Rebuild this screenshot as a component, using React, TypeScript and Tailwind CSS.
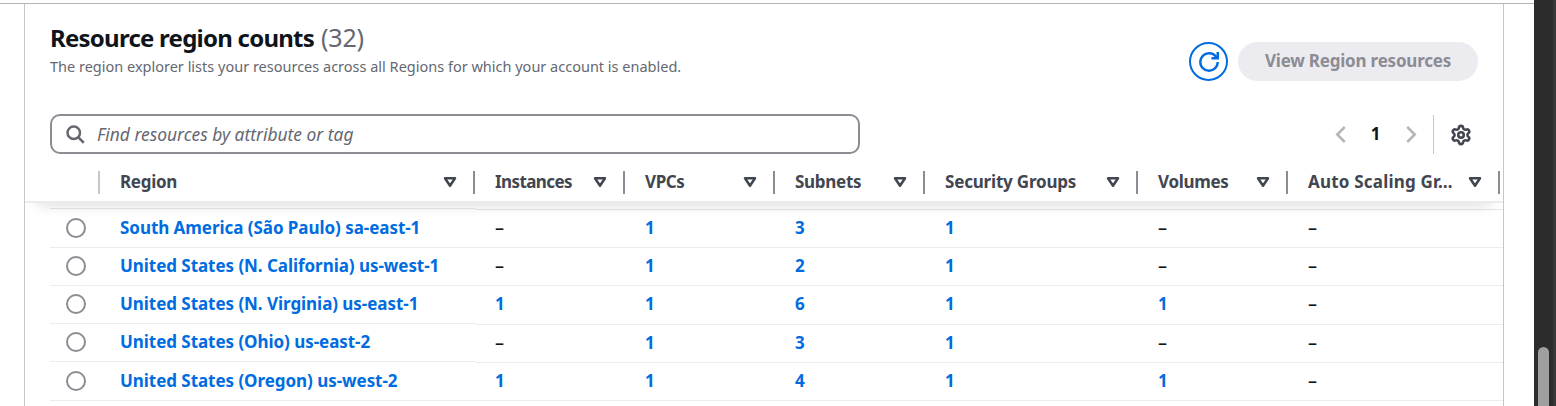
import React from "react";
import clsx from "clsx";
import { Settings } from "lucide-react";

type Column = { label: string; width: string; tracking: string };

const columns: Column[] = [
  { label: "Instances", width: "w-[150px]", tracking: "tracking-[-0.58px]" },
  { label: "VPCs", width: "w-[150px]", tracking: "tracking-[-0.4px]" },
  { label: "Subnets", width: "w-[150px]", tracking: "tracking-[-0.28px]" },
  { label: "Security Groups", width: "w-[213px]", tracking: "tracking-[-0.19px]" },
  { label: "Volumes", width: "w-[150px]", tracking: "tracking-[-0.3px]" },
  { label: "Auto Scaling Gr…", width: "w-[212px]", tracking: "tracking-[0.2px]" },
];

type Row = { region: string; left: string; right: string; counts: string[] };

const rows: Row[] = [
  { region: "South America (São Paulo) sa-east-1", left: "h-[39px]", right: "h-[38px] pb-[1px]", counts: ["–", "1", "3", "1", "–", "–"] },
  { region: "United States (N. California) us-west-1", left: "h-[38px] pb-[2px]", right: "h-[38px] pb-[2px]", counts: ["–", "1", "2", "1", "–", "–"] },
  { region: "United States (N. Virginia) us-east-1", left: "h-[38px] pb-[2px]", right: "h-[39px] pb-[2px]", counts: ["1", "1", "6", "1", "1", "–"] },
  { region: "United States (Ohio) us-east-2", left: "h-[38px] pb-[2px]", right: "h-[38px] pb-[2px]", counts: ["–", "1", "3", "1", "–", "–"] },
  { region: "United States (Oregon) us-west-2", left: "h-[39px]", right: "h-[38px] pb-[1px]", counts: ["1", "1", "4", "1", "1", "–"] },
];

function Icon({ children, className }: { children: React.ReactNode; className?: string }) {
  return (
    <svg
      viewBox="0 0 16 16"
      fill="none"
      stroke="currentColor"
      strokeWidth="2"
      className={clsx("size-5 shrink-0 overflow-visible", className)}
    >
      {children}
    </svg>
  );
}

function HeaderCell({ label, width, tracking }: Column) {
  return (
    <div className={clsx("flex h-[39px] shrink-0 items-center justify-between pr-[15px] pb-[1px] pl-[20px]", width)}>
      <span className={clsx("whitespace-nowrap", tracking)}>{label}</span>
      <Icon>
        <path d="M4 5h8l-4 6-4-6Z" strokeLinejoin="round" />
      </Icon>
    </div>
  );
}

function Divider({ light }: { light?: boolean }) {
  return <div className={clsx("-ml-[2px] h-[23px] w-[2px] shrink-0", light ? "bg-[#c6c6cd]" : "bg-[#8c8c94]")} />;
}

export default function App() {
  return (
    <div className="flex h-[406px] w-[1556px] overflow-hidden bg-white font-['Noto_Sans',sans-serif] text-[17px] text-[#0f141a]">
      <div className="h-full w-[1534px] pt-[3px]">
        <div className="h-px bg-[#b4b4bb]" />
        <div className="ml-[24px] flex h-[402px] w-[1480px] flex-col overflow-hidden border-x border-[#c6c6cd]">
          <header className="flex h-[110px] shrink-0 items-start justify-between pr-[25px] pl-[25px]">
            <div className="pt-[18px]">
              <h2 className="flex h-[32px] items-center text-[24px] font-bold tracking-[-0.76px] whitespace-nowrap">
                Resource region counts
                <span className="ml-[7px] text-[25px] font-normal tracking-[-0.2px] text-[#656871]">(32)</span>
              </h2>
              <p className="text-[14.5px] leading-[24px] whitespace-nowrap text-[#656871]">
                The region explorer lists your resources across all Regions for which your account is enabled.
              </p>
            </div>
            <div className="flex gap-[10px] pt-[38px]">
              <button className="flex size-[39px] items-center justify-center rounded-full border-2 border-[#006ce0] text-[#006ce0]">
                <Icon>
                  <path d="M10 5h5V0" />
                  <path d="M15 8a6.957 6.957 0 0 1-7 7 6.957 6.957 0 0 1-7-7 6.957 6.957 0 0 1 7-7 6.87 6.87 0 0 1 6.3 4" />
                </Icon>
              </button>
              <button className="h-[39px] w-[240px] rounded-full bg-[#ebebf0] pb-[1px] font-bold tracking-[-0.21px] text-[#8c8c94]">
                View Region resources
              </button>
            </div>
          </header>

          <div className="flex h-[40px] shrink-0 justify-between pr-[31px] pl-[25px]">
            <div className="flex w-[810px] items-center gap-[12px] rounded-[10px] border-2 border-[#8c8c94] pl-[13px] text-[#656871]">
              <Icon>
                <circle cx="7" cy="7" r="5" />
                <path d="m15 15-4.5-4.5" />
              </Icon>
              <span className="text-[17.4px] whitespace-nowrap italic">Find resources by attribute or tag</span>
            </div>
            <div className="flex items-center">
              <Icon className="text-[#b4b4bb]">
                <path d="M11 2.4 5 8.4l6 6" />
              </Icon>
              <span className="w-[50px] pr-[1px] text-center font-bold">1</span>
              <Icon className="text-[#b4b4bb]">
                <path d="m5 2.4 6 6-6 6" />
              </Icon>
              <div className="ml-[12px] h-[39px] w-px bg-[#c6c6cd]" />
              <Settings className="mt-[1px] ml-[16px] text-[#424650]" size={22} strokeWidth={2.8} />
            </div>
          </div>

          <div className="relative z-10 flex h-[49px] shrink-0 items-start border-b-2 border-[#e9ebed] bg-white pt-[9px] pl-[75px] font-bold text-[#424650] shadow-[0_14px_14px_-12px_rgba(0,7,22,0.14)]">
            <div className="flex items-center">
              <Divider light />
              <HeaderCell label="Region" width="w-[375px]" tracking="tracking-[-0.3px]" />
              {columns.map((c) => (
                <React.Fragment key={c.label}>
                  <Divider />
                  <HeaderCell {...c} />
                </React.Fragment>
              ))}
              <Divider />
            </div>
          </div>

          <div className="flex shrink-0 pl-[25px]">
            <div className="w-[425px]">
              <div className="h-[6px] border-b border-[#e4e5e9]" />
              {rows.map((r) => (
                <div key={r.region} className={clsx("flex items-center border-b border-[#ebebf0] pl-[16px]", r.left)}>
                  <span className="size-5 rounded-full border-2 border-[#8c8c94]" />
                  <a className="ml-[34px] font-bold tracking-[-0.05px] whitespace-nowrap text-[#006ce0]">{r.region}</a>
                </div>
              ))}
            </div>
            <div className="w-[1028px]">
              <div className="h-[7px] border-b border-[#e4e5e9]" />
              {rows.map((r) => (
                <div key={r.region} className={clsx("flex items-center border-b border-[#ebebf0]", r.right)}>
                  {r.counts.map((n, i) => (
                    <span
                      key={i}
                      className={clsx(
                        "shrink-0 pl-[20px]",
                        columns[i].width,
                        n === "–" ? "pb-[1px] text-[18px] leading-[25px] font-medium" : "font-bold text-[#006ce0]",
                      )}
                    >
                      {n}
                    </span>
                  ))}
                </div>
              ))}
            </div>
          </div>
        </div>
      </div>
      <div className="flex h-full w-[22px] items-end border-r-[3px] border-[#383838] bg-[#2c2c2c] pl-[4px]">
        <div className="h-[59px] w-[11px] rounded-t-full bg-[#9f9f9f]" />
      </div>
    </div>
  );
}
